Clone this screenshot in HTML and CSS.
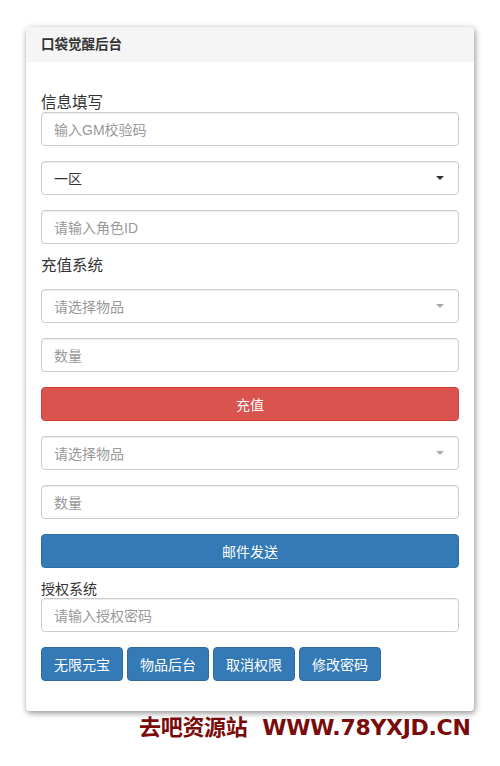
FILE: index.html
```
<!DOCTYPE html>
<html lang="zh-CN">
<head>
<meta charset="utf-8">
<title>口袋觉醒后台</title>
<link rel="stylesheet" href="styles.css">
</head>
<body>
<div class="panel">
  <div class="panel-heading">口袋觉醒后台</div>
  <div class="panel-body">
    <div class="label label-first">信息填写</div>
    <div class="field"><span class="ph">输入GM校验码</span></div>
    <div class="field select"><span class="val">一区</span><span class="caret dark"></span></div>
    <div class="field"><span class="ph">请输入角色ID</span></div>
    <div class="label label-mid">充值系统</div>
    <div class="field select"><span class="ph">请选择物品</span><span class="caret"></span></div>
    <div class="field"><span class="ph">数量</span></div>
    <div class="btn btn-block btn-danger">充值</div>
    <div class="field select"><span class="ph">请选择物品</span><span class="caret"></span></div>
    <div class="field"><span class="ph">数量</span></div>
    <div class="btn btn-block btn-primary">邮件发送</div>
    <div class="label label-small">授权系统</div>
    <div class="field"><span class="ph">请输入授权密码</span></div>
    <div class="btn-row">
      <div class="btn btn-primary">无限元宝</div>
      <div class="btn btn-primary">物品后台</div>
      <div class="btn btn-primary">取消权限</div>
      <div class="btn btn-primary">修改密码</div>
    </div>
  </div>
</div>
<div class="watermark">去吧资源站&nbsp; WWW.78YXJD.CN</div>
</body>
</html>
```
FILE: styles.css
```
html, body {
  margin: 0;
  padding: 0;
  background: #ffffff;
}
body {
  font-family: "Liberation Sans", "Noto Sans CJK SC", sans-serif;
  font-size: 14px;
  color: #333;
  width: 500px;
  height: 766px;
  position: relative;
  overflow: hidden;
}
.panel {
  margin: 27px 0 0 26px;
  width: 448px;
  height: 684px;
  box-sizing: border-box;
  background: #fff;
  border-radius: 4px;
  box-shadow: 1px 2px 6px rgba(0,0,0,0.45);
  overflow: hidden;
}
.panel-heading {
  height: 35px;
  line-height: 35px;
  background: #f5f5f5;
  padding: 0 15px;
  font-weight: bold;
  font-size: 13.5px;
  color: #333;
}
.panel-body {
  padding: 32px 15px 0 15px;
  display: flex;
  flex-direction: column;
}
.label {
  color: #333;
  height: 18px;
  line-height: 18px;
  font-size: 15.5px;
}
.label-mid {
  margin-top: -2px;
  margin-bottom: 14px;
}
.label-small {
  font-size: 14px;
  margin-top: -3px;
}
.field {
  height: 34px;
  box-sizing: border-box;
  border: 1px solid #ccc;
  border-radius: 4px;
  box-shadow: inset 0 1px 1px rgba(0,0,0,0.075);
  padding: 0 12px;
  display: flex;
  align-items: center;
  justify-content: space-between;
  margin-bottom: 15px;
  font-size: 14px;
}
.ph {
  color: #999;
}
.val {
  color: #333;
}
.caret {
  width: 0;
  height: 0;
  border-left: 4px solid transparent;
  border-right: 4px solid transparent;
  border-top: 4px solid #aaa;
  margin-right: 2px;
}
.caret.dark {
  border-top-color: #333;
}
.btn {
  height: 34px;
  box-sizing: border-box;
  border: 1px solid transparent;
  border-radius: 4px;
  padding: 0 12px;
  display: flex;
  align-items: center;
  justify-content: center;
  color: #fff;
  font-size: 14px;
}
.btn-block {
  margin-bottom: 15px;
}
.btn-danger {
  background: #d9534f;
  border-color: #d43f3a;
}
.btn-primary {
  background: #337ab7;
  border-color: #2e6da4;
}
.btn-row {
  display: flex;
  gap: 4px;
}
.btn-row .btn {
  width: 82px;
  padding: 0;
}
.watermark {
  position: absolute;
  left: 139px;
  top: 715px;
  font-family: "DejaVu Sans", "Noto Sans CJK SC", sans-serif;
  font-weight: bold;
  font-size: 22px;
  line-height: 26px;
  color: #7a0b0b;
  white-space: nowrap;
  letter-spacing: -0.3px;
}
```
